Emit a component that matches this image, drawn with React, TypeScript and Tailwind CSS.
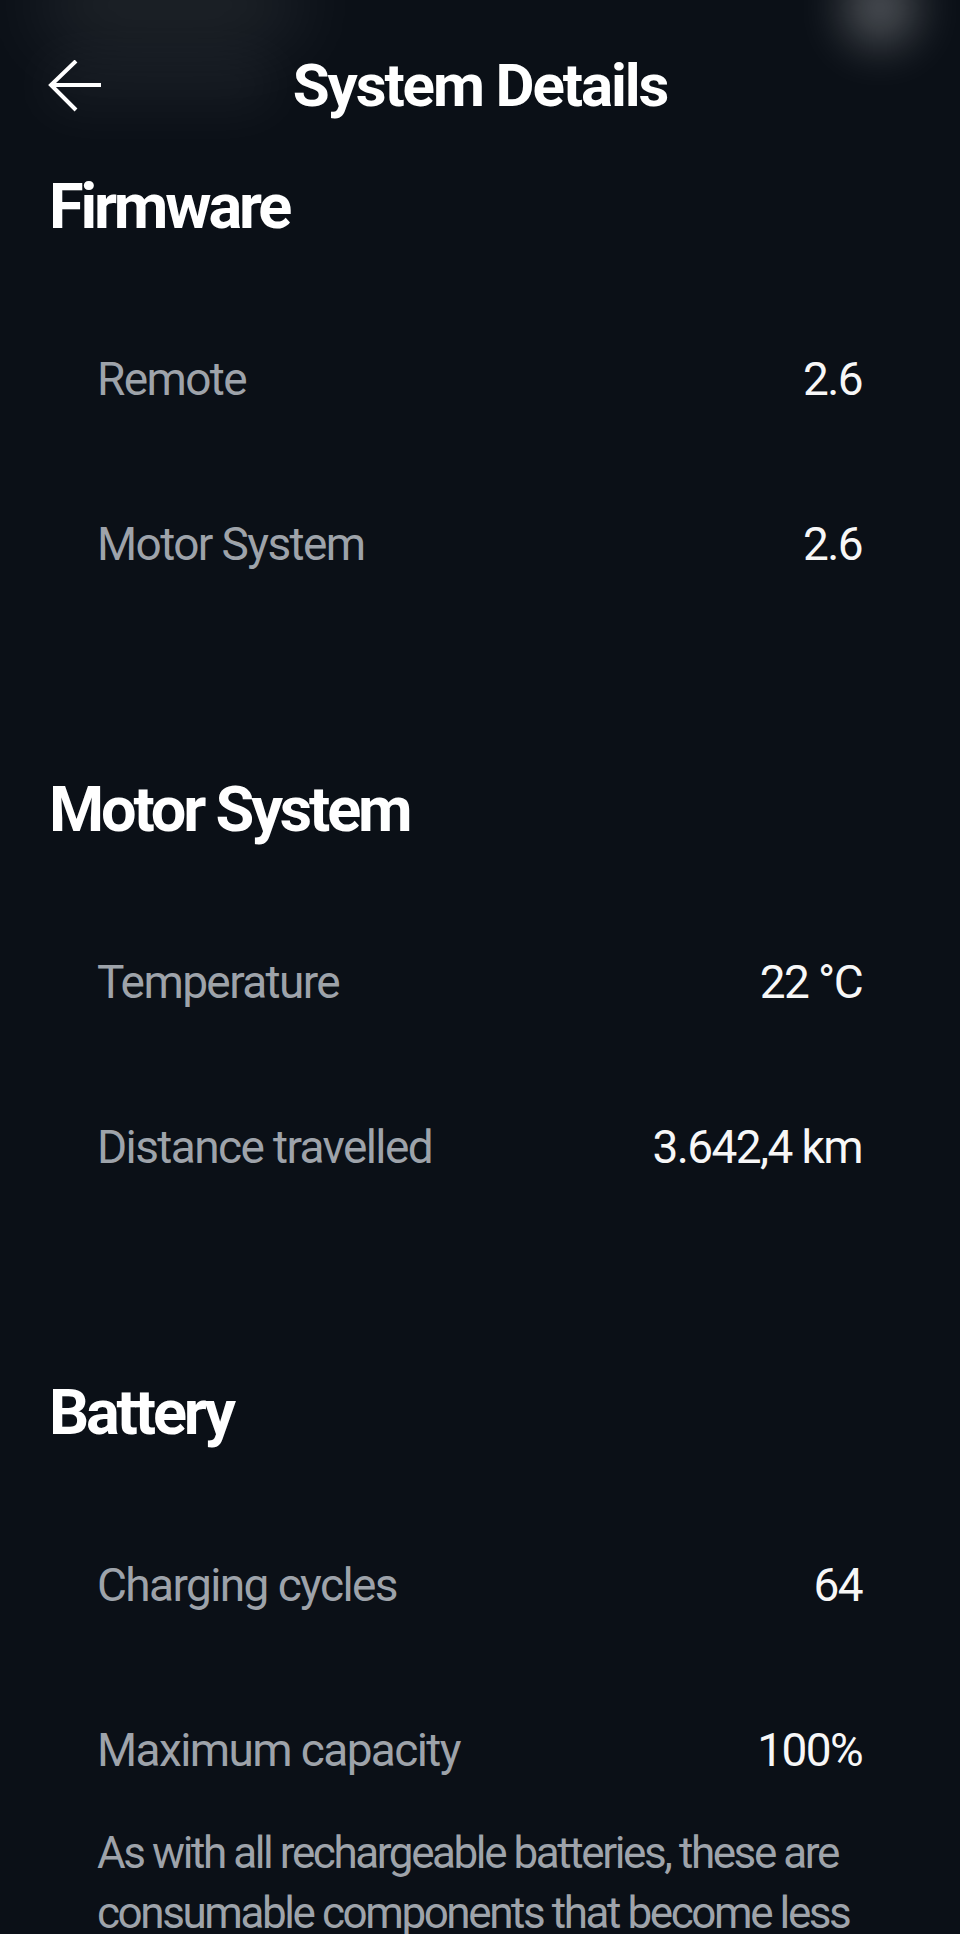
import React from "react";

const rowsFirmware = [
  ["Remote", "2.6"],
  ["Motor System", "2.6"],
];
const rowsMotor = [
  ["Temperature", "22 °C"],
  ["Distance travelled", "3.642,4 km"],
];
const rowsBattery = [
  ["Charging cycles", "64"],
  ["Maximum capacity", "100%"],
];

function Row({ label, value }: { label: string; value: string }) {
  return (
    <div className="flex justify-between h-[165px] leading-[165px] pl-[97px] pr-[98px] text-[46px] tracking-[-0.035em]">
      <span className="text-[#9ea3aa]">{label}</span>
      <span className="text-[#f7f7f7]">{value}</span>
    </div>
  );
}

function Section({
  title,
  rows,
  className,
  children,
}: {
  title: string;
  rows: string[][];
  className?: string;
  children?: React.ReactNode;
}) {
  return (
    <section className={className}>
      <h2 className="pl-[49px] text-[63px] leading-none font-bold text-white tracking-[-0.05em]">
        {title}
      </h2>
      <div className="mt-[59px]">
        {rows.map(([l, v]) => (
          <Row key={l} label={l} value={v} />
        ))}
      </div>
      {children}
    </section>
  );
}

export default function App() {
  return (
    <div className="relative min-h-screen overflow-hidden bg-[#0b1017] font-['Roboto','Liberation_Sans',sans-serif]">
      <div className="pointer-events-none absolute left-[40px] top-[-30px] h-[70px] w-[260px] rounded-full bg-white/10 blur-2xl" />
      <div className="pointer-events-none absolute left-[40px] top-[55px] h-[60px] w-[240px] rounded-full bg-white/[0.04] blur-xl" />
      <div className="pointer-events-none absolute left-[845px] top-[-30px] h-[75px] w-[70px] rounded-full bg-white/30 blur-xl" />

      <header className="relative grid h-[171px] grid-cols-[1fr_auto_1fr] items-center">
        <div className="pl-[46px] pt-[2px]">
          <svg width="58" height="54" viewBox="0 0 58 54" fill="none" stroke="white" strokeWidth="4" strokeLinecap="butt" strokeLinejoin="miter">
            <path d="M55 25H4" />
            <path d="M30 1L5 25L30 50" />
          </svg>
        </div>
        <h1 className="text-[60px] leading-none font-bold text-white tracking-[-0.035em]">System Details</h1>
        <div />
      </header>

      <Section title="Firmware" rows={rowsFirmware} className="relative mt-[4px]" />
      <Section title="Motor System" rows={rowsMotor} className="relative mt-[151px]" />
      <Section title="Battery" rows={rowsBattery} className="relative mt-[151px]">
        <p className="mt-[-10px] pl-[97px] pr-[90px] text-[44px] leading-[60px] text-[#9ea3aa] tracking-[-0.055em]">
          As with all rechargeable batteries, these are consumable components that become less effective
          over time and with use.
        </p>
      </Section>
    </div>
  );
}
